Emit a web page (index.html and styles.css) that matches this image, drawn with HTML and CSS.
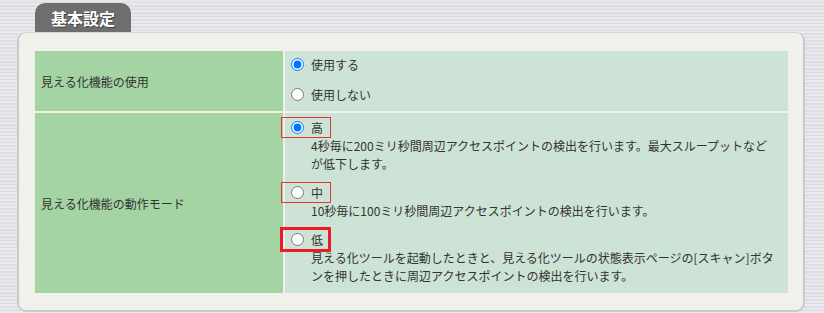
FILE: index.html
```html
<!DOCTYPE html>
<html lang="ja">
<head>
    <meta charset="UTF-8">
    <meta name="viewport" content="width=device-width, initial-scale=1.0">
    <title>基本設定</title>
    <link rel="stylesheet" href="styles.css">
</head>
<body>

    <!-- TAB -->
    <div class="tab">基本設定</div>

    <!-- SETTINGS PANEL -->
    <div class="panel">
        <div class="settings">
            <div class="label-cell">見える化機能の使用</div>
            <div class="value-cell use">
                <label class="opt"><input type="radio" name="use" checked>使用する</label>
                <label class="opt"><input type="radio" name="use">使用しない</label>
            </div>

            <div class="label-cell">見える化機能の動作モード</div>
            <div class="value-cell mode">
                <label class="mode-opt"><input type="radio" name="mode" checked>高</label>
                <p class="desc">4秒毎に200ミリ秒間周辺アクセスポイントの検出を行います。最大スループットなどが低下します。</p>

                <label class="mode-opt second"><input type="radio" name="mode">中</label>
                <p class="desc">10秒毎に100ミリ秒間周辺アクセスポイントの検出を行います。</p>

                <label class="mode-opt third"><input type="radio" name="mode">低</label>
                <p class="desc last">見える化ツールを起動したときと、見える化ツールの状態表示ページの[スキャン]ボタンを押したときに周辺アクセスポイントの検出を行います。</p>
            </div>
        </div>
    </div>

</body>
</html>
```

FILE: styles.css
```css
* {
    margin: 0;
    padding: 0;
    box-sizing: border-box;
}

body {
    height: 313px;
    overflow: hidden;
    font-family: "Noto Sans CJK JP", sans-serif;
    font-size: 12px;
    color: #333;
    background-color: #e3e5e9;
    background-image: repeating-linear-gradient(180deg,
        #e6e8ec 0, #e6e8ec 2px,
        #d9dbe0 2px, #d9dbe0 3px,
        #e9ebee 3px, #e9ebee 5px,
        #dcdee3 5px, #dcdee3 7px);
}

/* TAB */
.tab {
    width: 96px;
    height: 29px;
    margin: 3px 0 0 35px;
    background: #6e6e6e;
    border-radius: 10px 10px 0 0;
    color: white;
    font-size: 16px;
    font-weight: bold;
    line-height: 31px;
    text-align: center;
    text-shadow: 1px 1px 0 #444;
}

/* PANEL */
.panel {
    width: 788px;
    margin-left: 17px;
    padding: 18px 15px 17px 16px;
    background: #f1f1ec;
    border: 2px solid #cacacd;
    border-top: 1px solid #d4d4d7;
    border-radius: 9px;
}

.settings {
    display: grid;
    grid-template-columns: 248px 1fr;
    gap: 2px;
    width: 753px;
}

.label-cell {
    display: flex;
    align-items: center;
    padding-left: 6px;
    background: #a4d3a4;
}

.value-cell {
    background: #cde3d6;
    padding: 0 12px 0 6px;
}

/* USE */
.use { padding-bottom: 4px; }

.opt {
    display: flex;
    align-items: center;
    height: 26px;
}

.opt:first-child { margin-bottom: 4px; }

input[type="radio"] {
    width: 13px;
    height: 13px;
    margin: 0 7px 0 0;
}

/* MODE */
.mode {
    padding-top: 4px;
    padding-bottom: 8px;
}

.mode-opt {
    display: flex;
    align-items: center;
    width: 50px;
    height: 21px;
    margin-left: -10px;
    padding-left: 9px;
    border: 1px solid #e4343a;
}

.mode-opt.second { margin-top: 9px; }

.mode-opt.third {
    width: 51px;
    height: 25px;
    margin-top: 7px;
    margin-left: -11px;
    padding-left: 8px;
    border: 3px solid #ec1c24;
}

.desc {
    margin: -1px 0 0 20px;
    line-height: 18px;
}

.desc.last { margin-top: -3px; }
```
